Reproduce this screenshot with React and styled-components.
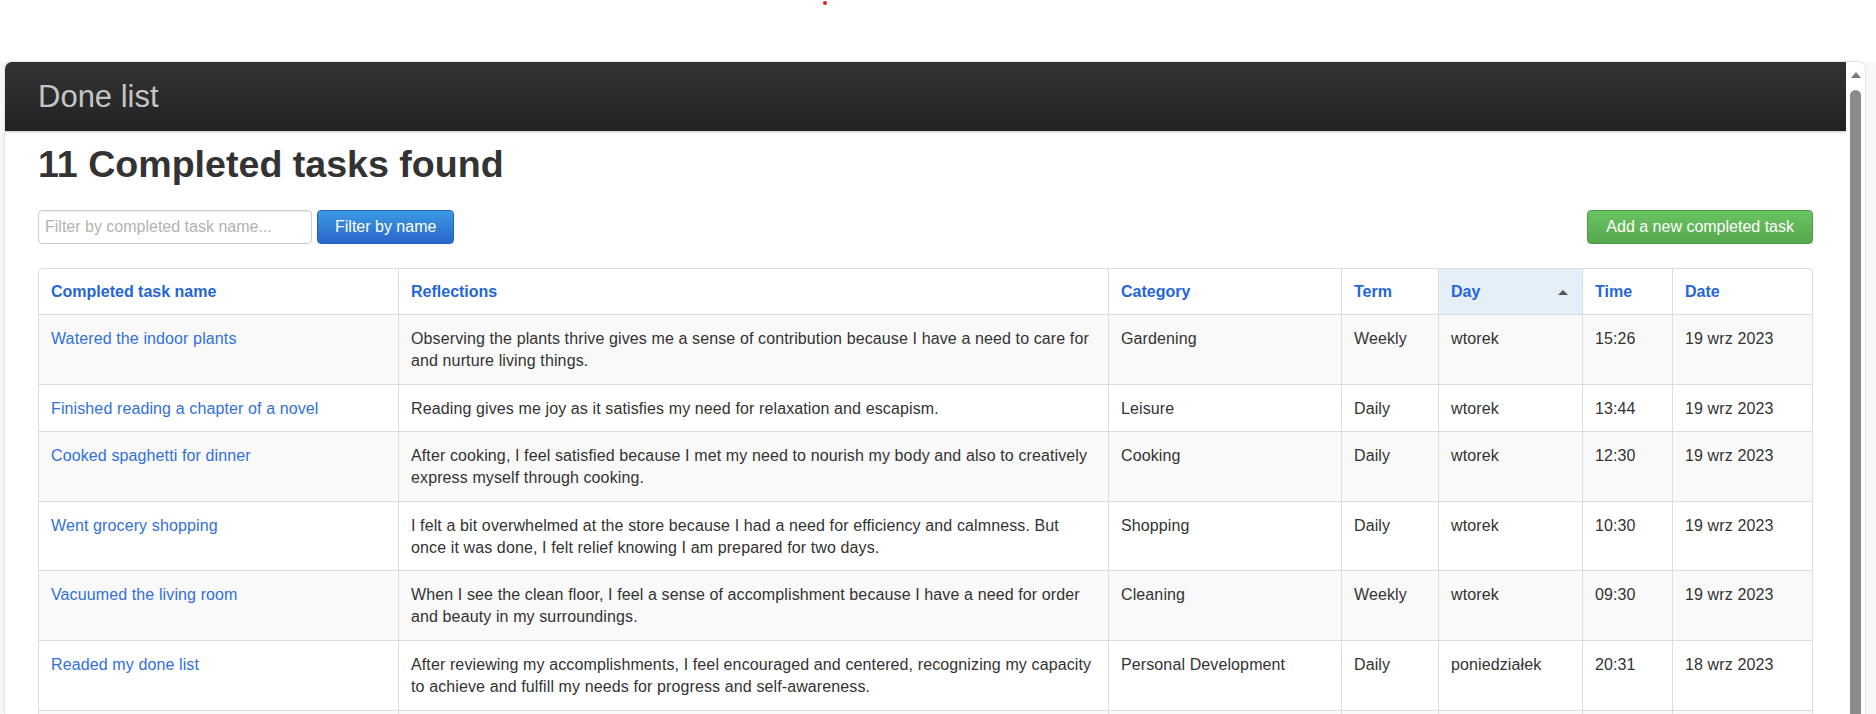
import React from 'react';
import styled, { createGlobalStyle } from 'styled-components';

const GlobalStyle = createGlobalStyle`
	* {
		box-sizing: border-box;
	}
	html, body {
		margin: 0;
		padding: 0;
		height: 100%;
		overflow: hidden;
		background: #fff;
		font-family: "Liberation Sans", Arial, sans-serif;
		color: #333;
	}
`;

const TopStrip = styled.div`
	height: 61px;
	background: #fff;
`;

const Dot = styled.span`
	display: block;
	width: 4px;
	height: 4px;
	margin: 1px 0 0 823px;
	border-radius: 50%;
	background: #e0201a;
`;

const Stage = styled.div`
	height: calc(100vh - 61px);
	padding-left: 5px;
	background: #f7f7f7;
`;

const Frame = styled.div`
	display: flex;
	width: 1860px;
	height: 100%;
	background: #fff;
	border-radius: 7px 7px 0 0;
	box-shadow: 0 0 0 1px #e4e4e4, 0 -1px 3px rgba(0, 0, 0, 0.06);
	overflow: hidden;
`;

const Content = styled.div`
	flex: 1;
	min-width: 0;
	overflow: hidden;
`;

const Navbar = styled.div`
	display: flex;
	align-items: center;
	height: 69px;
	padding-left: 33px;
	background: linear-gradient(#333, #222);
	box-shadow: 0 1px 3px rgba(0, 0, 0, 0.25);
	color: #c4c4c4;
	font-size: 31px;
`;

const Body = styled.div`
	padding: 0 33px;
`;

const Heading = styled.h1`
	margin: 13px 0 0;
	font-size: 37.6px;
	line-height: 41px;
	font-weight: bold;
	color: #333;
`;

const Toolbar = styled.div`
	display: flex;
	justify-content: space-between;
	align-items: center;
	margin-top: 25px;
`;

const Group = styled.div`
	display: flex;
	gap: 5px;
`;

const Input = styled.input`
	width: 274px;
	height: 34px;
	padding: 0 6px;
	border: 1px solid #ccc;
	border-radius: 4px;
	box-shadow: inset 0 1px 1px rgba(0, 0, 0, 0.075);
	font-family: inherit;
	font-size: 16px;
	color: #555;
	outline: none;

	&::placeholder {
		color: #b3b3b3;
	}
`;

const Button = styled.button`
	height: 34px;
	padding: 0 ${(props) => (props.wide ? '18px' : '17px')};
	border: 1px solid ${(props) => (props.green ? '#4c9a45' : '#2a60bd')};
	border-radius: 4px;
	background: ${(props) =>
		props.green
			? 'linear-gradient(#6ac463, #55a74c)'
			: 'linear-gradient(#3c9ae3, #2866c9)'};
	color: #fff;
	font-family: inherit;
	font-size: 16px;
	cursor: pointer;
`;

const Table = styled.table`
	width: 1775px;
	margin-top: 24px;
	table-layout: fixed;
	border-collapse: separate;
	border-spacing: 0;
	border: 1px solid #ddd;
	border-radius: 4px;
	font-size: 16px;
	line-height: 22px;
`;

const Th = styled.th`
	padding: 12px 12px 11px;
	text-align: left;
	vertical-align: top;
	font-weight: bold;
	color: #2566d6;
	background: ${(props) => (props.sorted ? '#e5eff7' : 'transparent')};
	border-left: ${(props) => (props.first ? 'none' : '1px solid #ddd')};
	border-top-left-radius: ${(props) => (props.first ? '4px' : '0')};
`;

const SortHead = styled.div`
	display: flex;
	justify-content: space-between;
	align-items: center;
`;

const SortArrow = styled.span`
	width: 0;
	height: 0;
	margin-right: 2px;
	border-left: 5px solid transparent;
	border-right: 5px solid transparent;
	border-bottom: 5px solid #555;
`;

const Row = styled.tr`
	background: ${(props) => (props.striped ? '#f9f9f9' : '#fff')};
`;

const Td = styled.td`
	padding: 13px 12px 11.6px;
	vertical-align: top;
	letter-spacing: 0.115px;
	border-top: 1px solid #ddd;
	border-left: ${(props) => (props.first ? 'none' : '1px solid #ddd')};
`;

const TaskLink = styled.a`
	color: #3270da;
	text-decoration: none;
`;

const ScrollTrack = styled.div`
	display: flex;
	flex-direction: column;
	align-items: center;
	width: 19px;
	padding-top: 10px;
	background: #fff;
`;

const ScrollArrow = styled.span`
	width: 0;
	height: 0;
	border-left: 5px solid transparent;
	border-right: 5px solid transparent;
	border-bottom: 6px solid #7c7c7c;
`;

const ScrollThumb = styled.div`
	flex: 1;
	width: 11px;
	margin-top: 12px;
	border-radius: 6px 6px 0 0;
	background: #8b8b8b;
`;

const columns = [
	{ key: 'name', label: 'Completed task name', width: 359 },
	{ key: 'reflections', label: 'Reflections', width: 710 },
	{ key: 'category', label: 'Category', width: 233 },
	{ key: 'term', label: 'Term', width: 97 },
	{ key: 'day', label: 'Day', width: 144, sorted: true },
	{ key: 'time', label: 'Time', width: 90 },
	{ key: 'date', label: 'Date', width: 140 }
];

const tasks = [
	{
		name: 'Watered the indoor plants',
		reflections:
			'Observing the plants thrive gives me a sense of contribution because I have a need to care for and nurture living things.',
		category: 'Gardening',
		term: 'Weekly',
		day: 'wtorek',
		time: '15:26',
		date: '19 wrz 2023'
	},
	{
		name: 'Finished reading a chapter of a novel',
		reflections:
			'Reading gives me joy as it satisfies my need for relaxation and escapism.',
		category: 'Leisure',
		term: 'Daily',
		day: 'wtorek',
		time: '13:44',
		date: '19 wrz 2023'
	},
	{
		name: 'Cooked spaghetti for dinner',
		reflections:
			'After cooking, I feel satisfied because I met my need to nourish my body and also to creatively express myself through cooking.',
		category: 'Cooking',
		term: 'Daily',
		day: 'wtorek',
		time: '12:30',
		date: '19 wrz 2023'
	},
	{
		name: 'Went grocery shopping',
		reflections:
			'I felt a bit overwhelmed at the store because I had a need for efficiency and calmness. But once it was done, I felt relief knowing I am prepared for two days.',
		category: 'Shopping',
		term: 'Daily',
		day: 'wtorek',
		time: '10:30',
		date: '19 wrz 2023'
	},
	{
		name: 'Vacuumed the living room',
		reflections:
			'When I see the clean floor, I feel a sense of accomplishment because I have a need for order and beauty in my surroundings.',
		category: 'Cleaning',
		term: 'Weekly',
		day: 'wtorek',
		time: '09:30',
		date: '19 wrz 2023'
	},
	{
		name: 'Readed my done list',
		reflections:
			'After reviewing my accomplishments, I feel encouraged and centered, recognizing my capacity to achieve and fulfill my needs for progress and self-awareness.',
		category: 'Personal Development',
		term: 'Daily',
		day: 'poniedziałek',
		time: '20:31',
		date: '18 wrz 2023'
	},
	{
		name: 'Went for an evening walk',
		reflections:
			'Walking outside helps me unwind because I have a need for movement and fresh air.',
		category: 'Health',
		term: 'Daily',
		day: 'poniedziałek',
		time: '19:10',
		date: '18 wrz 2023'
	}
];

export default function App() {
	return (
		<>
			<GlobalStyle />
			<TopStrip>
				<Dot />
			</TopStrip>
			<Stage>
				<Frame>
					<Content>
						<Navbar>Done list</Navbar>
						<Body>
							<Heading>11 Completed tasks found</Heading>
							<Toolbar>
								<Group>
									<Input placeholder="Filter by completed task name..." />
									<Button>Filter by name</Button>
								</Group>
								<Button green wide>
									Add a new completed task
								</Button>
							</Toolbar>
							<Table>
								<colgroup>
									{columns.map((col) => (
										<col key={col.key} style={{ width: col.width }} />
									))}
								</colgroup>
								<thead>
									<tr>
										{columns.map((col, i) => (
											<Th key={col.key} first={i === 0} sorted={col.sorted}>
												{col.sorted ? (
													<SortHead>
														{col.label}
														<SortArrow />
													</SortHead>
												) : (
													col.label
												)}
											</Th>
										))}
									</tr>
								</thead>
								<tbody>
									{tasks.map((task, i) => (
										<Row key={i} striped={i % 2 === 0}>
											<Td first>
												<TaskLink href="#">{task.name}</TaskLink>
											</Td>
											<Td>{task.reflections}</Td>
											<Td>{task.category}</Td>
											<Td>{task.term}</Td>
											<Td>{task.day}</Td>
											<Td>{task.time}</Td>
											<Td>{task.date}</Td>
										</Row>
									))}
								</tbody>
							</Table>
						</Body>
					</Content>
					<ScrollTrack>
						<ScrollArrow />
						<ScrollThumb />
					</ScrollTrack>
				</Frame>
			</Stage>
		</>
	);
}
